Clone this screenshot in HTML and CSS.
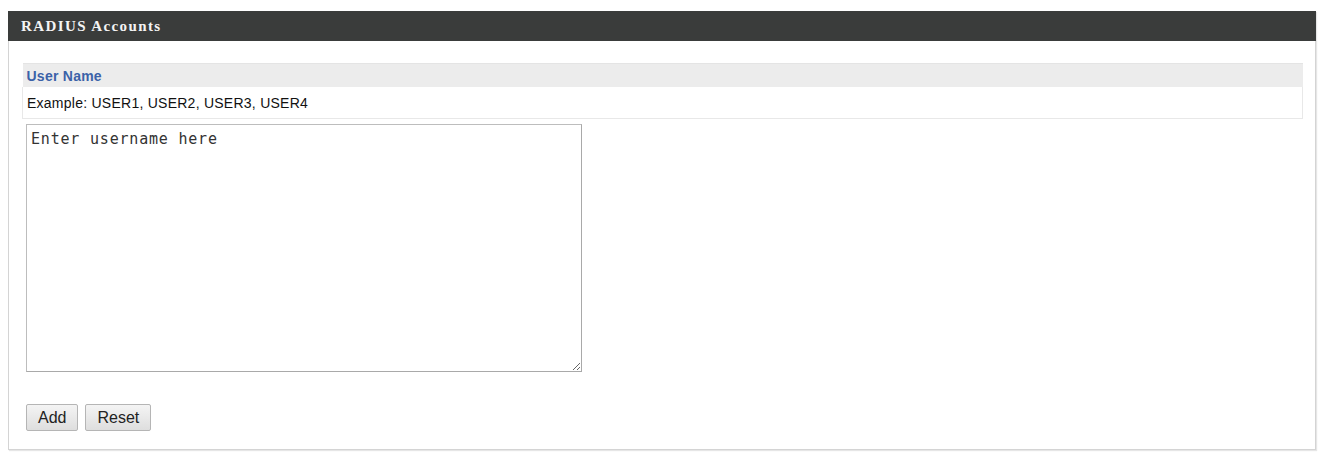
FILE: index.html
```html
<!DOCTYPE html>
<html lang="en">
<head>
  <meta charset="UTF-8">
  <title>RADIUS Accounts</title>
  <link rel="stylesheet" href="styles.css">
</head>
<body>
  <div class="panel">
    <div class="panel-title">RADIUS Accounts</div>
    <div class="panel-body">
      <table class="info-table">
        <tr class="label-row"><td>User Name</td></tr>
        <tr class="hint-row"><td>Example: USER1, USER2, USER3, USER4</td></tr>
      </table>
      <textarea class="user-input">Enter username here</textarea>
      <div class="buttons">
        <button class="btn">Add</button>
        <button class="btn">Reset</button>
      </div>
    </div>
  </div>
</body>
</html>
```

FILE: styles.css
```css
body {
  margin: 0;
  padding: 11px 5px 5px 8px;
  background: #fff;
  font-family: "Liberation Sans", Arial, sans-serif;
}

.panel {
  border: 1px solid #d4d4d4;
  border-top: none;
  height: 439px;
  box-sizing: border-box;
  box-shadow: 1px 1px 1px #e6e6e6;
}

.panel-title {
  background: #3a3c3b;
  color: #f4f4f4;
  font-family: "Liberation Serif", "Times New Roman", serif;
  font-weight: bold;
  font-size: 15px;
  letter-spacing: 1.4px;
  height: 30px;
  line-height: 31px;
  padding-left: 13px;
  margin: 0 -1px;
}

.panel-body {
  padding: 22px 12px 0 13px;
}

.info-table {
  width: 100%;
  border-collapse: collapse;
  font-size: 14px;
  letter-spacing: 0.25px;
}

.info-table td {
  padding: 0 4px;
}

.label-row td {
  background: #ececec;
  color: #3b62a8;
  font-weight: bold;
  height: 23px;
  border-top: 1px solid #e4e4e4;
}

.hint-row td {
  color: #111;
  height: 31px;
  border: 1px solid #e8e8e8;
  border-top: none;
  background: #fff;
}

.user-input {
  display: block;
  width: 556px;
  height: 248px;
  margin: 5px 0 0 4px;
  box-sizing: border-box;
  border: 1px solid #bdbdbd;
  border-right-color: #a9a9a9;
  border-bottom-color: #a9a9a9;
  font-family: "DejaVu Sans Mono", Consolas, monospace;
  font-size: 15px;
  letter-spacing: 0.8px;
  color: #333;
  padding: 5px 4px;
  resize: both;
}

.buttons {
  margin: 32px 0 0 4px;
  display: flex;
  gap: 7px;
}

.btn {
  font-family: "Liberation Sans", Arial, sans-serif;
  font-size: 16px;
  color: #222;
  height: 27px;
  padding: 0 11px;
  background: linear-gradient(#f4f4f4, #dedede);
  border: 1px solid #b5b5b5;
  border-radius: 2px;
}
```
